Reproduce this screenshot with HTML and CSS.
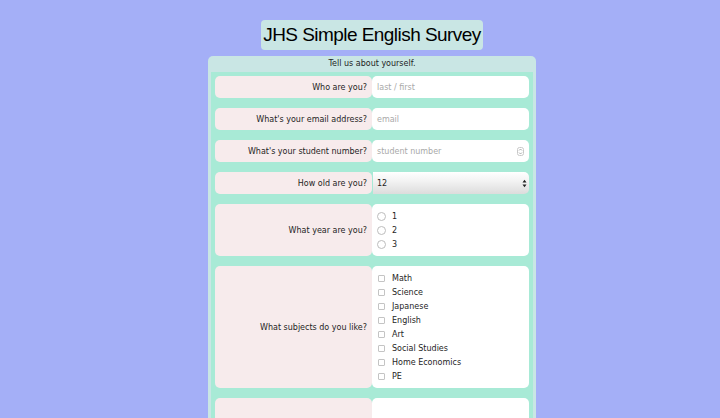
FILE: index.html
```html
<!DOCTYPE html>
<html>
<head>
<meta charset="utf-8">
<link rel="stylesheet" href="styles.css">
</head>
<body>
<div class="page">
  <header class="head"><h1 class="title">JHS Simple English Survey</h1></header>
  <section class="card">
    <p class="intro">Tell us about yourself.</p>
    <div class="fields">
      <div class="row">
        <div class="label">Who are you?</div>
        <div class="cell"><span class="ph">last / first</span></div>
      </div>
      <div class="row">
        <div class="label">What's your email address?</div>
        <div class="cell"><span class="ph">email</span></div>
      </div>
      <div class="row">
        <div class="label">What's your student number?</div>
        <div class="cell spin-cell"><span class="ph">student number</span>
          <svg class="spin" width="7" height="9" viewBox="0 0 7 9"><rect x="0.5" y="0.5" width="6" height="8" rx="2" fill="none" stroke="#c8c8c8"/><path d="M2 3.5 L3.5 2 L5 3.5 M2 5.5 L3.5 7 L5 5.5" fill="none" stroke="#999" stroke-width="0.8"/></svg>
        </div>
      </div>
      <div class="row">
        <div class="label">How old are you?</div>
        <div class="cell select"><span class="val">12</span>
          <svg class="arrows" width="5" height="9" viewBox="0 0 5 9"><path d="M0.5 3.5 L2.5 0.8 L4.5 3.5 Z M0.5 5.5 L2.5 8.2 L4.5 5.5 Z" fill="#222"/></svg>
        </div>
      </div>
      <div class="row">
        <div class="label">What year are you?</div>
        <div class="cell list">
          <div class="opt"><span class="radio"></span>1</div>
          <div class="opt"><span class="radio"></span>2</div>
          <div class="opt"><span class="radio"></span>3</div>
        </div>
      </div>
      <div class="row">
        <div class="label">What subjects do you like?</div>
        <div class="cell list">
          <div class="opt"><span class="check"></span>Math</div>
          <div class="opt"><span class="check"></span>Science</div>
          <div class="opt"><span class="check"></span>Japanese</div>
          <div class="opt"><span class="check"></span>English</div>
          <div class="opt"><span class="check"></span>Art</div>
          <div class="opt"><span class="check"></span>Social Studies</div>
          <div class="opt"><span class="check"></span>Home Economics</div>
          <div class="opt"><span class="check"></span>PE</div>
        </div>
      </div>
      <div class="row tall">
        <div class="label"></div>
        <div class="cell"></div>
      </div>
    </div>
  </section>
</div>
</body>
</html>
```
FILE: styles.css
```css
html, body { margin: 0; padding: 0; }
body {
  background: #a4aff7;
  font-family: "DejaVu Sans", Verdana, sans-serif;
  font-size: 8px;
  color: #1e1e1e;
}
.page {
  width: 328px;
  margin: 0 auto;
  padding: 20px 0 0 24px;
}
.head { text-align: center; }
.title {
  display: inline-block;
  margin: 0;
  padding: 0 2px;
  background: #c9e6e4;
  border-radius: 4px;
  font-family: "Liberation Sans", Arial, sans-serif;
  font-weight: normal;
  font-size: 19px;
  letter-spacing: -0.55px;
  line-height: 30px;
  color: #000;
}
.card {
  margin-top: 6px;
  background: #c9e6e4;
  border-radius: 5px;
  padding: 0 3px;
}
.intro {
  margin: 0;
  text-align: center;
  line-height: 16px;
}
.fields {
  background: #a8ead6;
  padding: 4px;
  display: flex;
  flex-direction: column;
  gap: 10px;
}
.row {
  display: grid;
  grid-template-columns: 157px 157px;
  min-height: 22px;
}
.label {
  background: #f7ebec;
  border-radius: 5px;
  display: flex;
  align-items: center;
  justify-content: flex-end;
  padding-right: 5px;
}
.cell {
  background: #fff;
  border-radius: 5px;
  display: flex;
  align-items: center;
  padding-left: 5px;
}
.ph { color: #a9a9a9; }
.spin-cell { justify-content: space-between; padding-right: 5px; }
.select {
  background: linear-gradient(#ffffff, #f3f3f3 40%, #dcdcdc);
  border-radius: 0 5px 5px 0;
  justify-content: space-between;
  padding-right: 2px;
  margin-left: 1px;
  padding-left: 4px;
}
.val { color: #1e1e1e; }
.list {
  flex-direction: column;
  align-items: flex-start;
  padding: 5px 0 5px 0;
}
.opt {
  height: 14px;
  display: flex;
  align-items: center;
}
.radio {
  box-sizing: border-box;
  width: 9px;
  height: 9px;
  border: 1px solid #bdbdbd;
  border-radius: 50%;
  margin: 0 6px 0 5px;
}
.check {
  box-sizing: border-box;
  width: 7px;
  height: 7px;
  border: 1px solid #c4c4c4;
  border-radius: 1px;
  margin: 0 7px 0 6px;
}
.tall { min-height: 60px; }
```
